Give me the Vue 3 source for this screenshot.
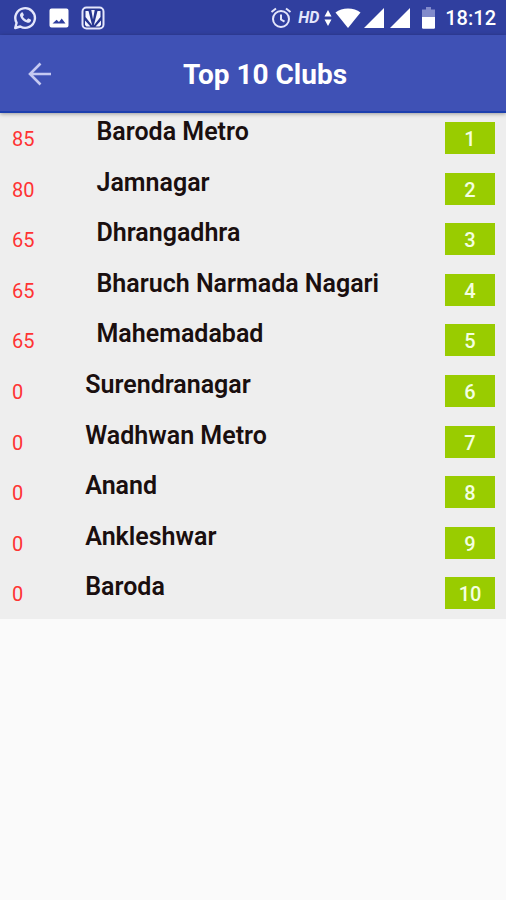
<script setup>
const clubs = [
  { name: 'Baroda Metro', score: 85 },
  { name: 'Jamnagar', score: 80 },
  { name: 'Dhrangadhra', score: 65 },
  { name: 'Bharuch Narmada Nagari', score: 65 },
  { name: 'Mahemadabad', score: 65 },
  { name: 'Surendranagar', score: 0 },
  { name: 'Wadhwan Metro', score: 0 },
  { name: 'Anand', score: 0 },
  { name: 'Ankleshwar', score: 0 },
  { name: 'Baroda', score: 0 },
]
</script>

<template>
  <div class="screen">
    <div class="status">
      <div class="notifications">
        <svg class="icon" viewBox="0 0 24 24" aria-hidden="true">
          <path d="M2.2 22 3.6 16.800A9.800 9.800 0 1 1 7.300 20.500Z" fill="none" stroke="#e4e6fb" stroke-width="2.400" stroke-linejoin="round" />
          <path d="M8.600 6.600c.5-.4 1.200-.3 1.400.3l.8 1.900c.1.400 0 .7-.9 1.700.9 1.700 2 2.700 3.700 3.500l1.200-1.300c.3-.3.6-.3.9-.2l1.900.9c.5.3.6.7.4 1.300-.5 1.500-2 2.300-3.500 2-3.700-.8-6.400-3.400-7.400-6.600-.4-1.500.3-2.800 1.500-3.500Z" fill="#e4e6fb" />
        </svg>
        <svg class="icon" viewBox="0 0 24 24" aria-hidden="true">
          <path fill="#fff" fill-rule="evenodd" d="M4.500 2.500h15a2 2 0 0 1 2 2v15a2 2 0 0 1-2 2h-15a2 2 0 0 1-2-2v-15a2 2 0 0 1 2-2ZM5.500 17.500h13l-3.800-5-2.700 3.400-2.400-2.200Z" />
        </svg>
        <svg class="icon" viewBox="0 0 24 24" aria-hidden="true">
          <rect x="1.500" y="1.500" width="21" height="21" rx="4" fill="#26358f" stroke="#e4e6fb" stroke-width="2" />
          <path d="M4.500 5 7.500 5 11.200 19.500 4.500 11ZM10.300 4h3.400L12 13.500ZM16.500 5h3v6L12.800 19.500ZM4 14.500 9.500 20.500H5.500L4 19ZM20 14.500 14.500 20.500h4L20 19Z" fill="#f4f5ff" />
        </svg>
      </div>
      <div class="system">
        <svg class="alarm" viewBox="0 0 22 22" aria-hidden="true">
          <g fill="none" stroke="#e4e6fb" stroke-width="2">
            <circle cx="11" cy="12" r="8" />
            <path d="M1.500 5 6 1.500M20.500 5 16 1.500M11 7.500v5l3.500 2.200" />
          </g>
        </svg>
        <span class="hd">HD</span>
        <svg class="data" viewBox="0 0 8 18" aria-hidden="true">
          <path d="M4 1 7.500 7.500H.5ZM4 17 .5 10.500h7Z" fill="#fff" />
        </svg>
        <svg class="wifi" viewBox="0 0 26 20" aria-hidden="true">
          <path d="M13 20 .5 4.500C4 1.800 8 .5 13 .5s9 1.300 12.500 4Z" fill="#fff" />
        </svg>
        <svg class="signal" viewBox="0 0 20 20" aria-hidden="true">
          <path d="M0 20 20 0v20Z" fill="#fff" />
        </svg>
        <svg class="signal second" viewBox="0 0 20 20" aria-hidden="true">
          <path d="M0 20 20 0v20Z" fill="#fff" />
        </svg>
        <svg class="battery" viewBox="0 0 13 22" aria-hidden="true">
          <path d="M4 0h5v2.500h4V10H0V2.500h4Z" fill="#828bcb" />
          <path d="M0 10h13v10.500a1.200 1.200 0 0 1-1.200 1.200H1.200A1.200 1.200 0 0 1 0 20.500Z" fill="#fff" />
        </svg>
        <time class="clock">18:12</time>
      </div>
    </div>
    <header class="bar">
      <button class="back" type="button" aria-label="Back">
        <svg viewBox="0 0 24 24" aria-hidden="true">
          <path d="M23 12H2M12.500 1.500 2 12l10.500 10.500" fill="none" stroke="#c5c9f2" stroke-width="2.600" />
        </svg>
      </button>
      <h1 class="title">Top 10 Clubs</h1>
    </header>
    <ol class="clubs">
      <li v-for="(club, i) in clubs" :key="club.name" class="club">
        <span class="score">{{ club.score }}</span>
        <span class="name">{{ club.name }}</span>
        <span class="rank">{{ i + 1 }}</span>
      </li>
    </ol>
  </div>
</template>

<style>
body {
  margin: 0;
  background: #fafafa;
}
</style>

<style scoped>
.screen {
  min-height: 100vh;
  background: #fafafa;
  font-family: Roboto, "Liberation Sans", sans-serif;
}
svg {
  display: block;
}
.status {
  display: flex;
  justify-content: space-between;
  align-items: center;
  height: 35px;
  padding: 0 10px 0 13px;
  background: #303f9f;
  color: #fff;
}
.notifications {
  display: flex;
  gap: 10px;
}
.icon {
  width: 24px;
  height: 24px;
}
.system {
  display: flex;
  align-items: center;
}
.alarm {
  width: 22px;
  height: 22px;
}
.hd {
  margin: 0 5px 0 6px;
  font-size: 16px;
  font-weight: 700;
  font-style: italic;
  color: #e4e6fb;
}
.data {
  width: 8px;
  height: 18px;
  margin-right: 3px;
}
.wifi {
  width: 26px;
  height: 20px;
}
.signal {
  width: 20px;
  height: 20px;
  margin-left: 3px;
}
.second {
  margin-left: 6px;
}
.battery {
  width: 13px;
  height: 22px;
  margin: 0 10px 0 12px;
}
.clock {
  font-size: 20px;
  font-weight: 500;
}
.bar {
  display: grid;
  grid-template-columns: 80px 1fr 56px;
  align-items: center;
  height: 78px;
  padding-top: 2px;
  box-sizing: border-box;
  border-bottom: 2px solid #1c3fae;
  background: #3f51b5;
  box-shadow: 0 1px 4px rgba(0, 0, 0, 0.35);
  position: relative;
}
.back {
  justify-self: center;
  padding: 0;
  border: 0;
  background: none;
}
.back svg {
  width: 24px;
  height: 24px;
}
.title {
  margin: 0;
  text-align: center;
  font-size: 28px;
  font-weight: 700;
  color: #fff;
}
.clubs {
  display: grid;
  grid-auto-rows: 1fr;
  min-height: 506px;
  margin: 0;
  padding: 0;
  list-style: none;
  background: #eee;
}
.club {
  display: flex;
  align-items: flex-start;
  padding: 9px 11px 0 12px;
}
.score {
  line-height: 34px;
  font-size: 20px;
  font-weight: 400;
  color: #f33;
}
.name {
  flex: 1;
  margin-left: 62px;
  line-height: 20px;
  font-size: 25px;
  font-weight: 600;
  color: #1a0f0f;
}
.rank {
  width: 50px;
  line-height: 34px;
  height: 32px;
  font-size: 20px;
  font-weight: 500;
  text-align: center;
  background: #9c0;
  color: #f4ffe0;
}
</style>
